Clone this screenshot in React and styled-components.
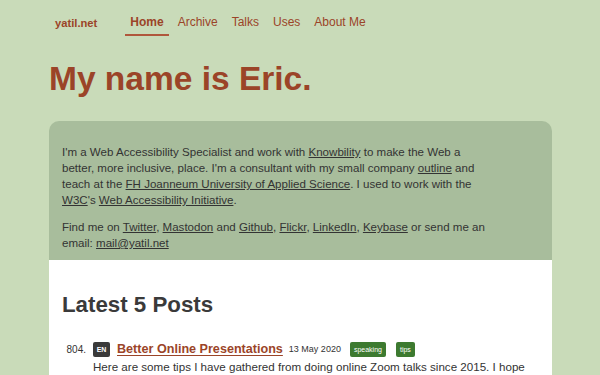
import React from 'react';
import styled, { createGlobalStyle } from 'styled-components';

const GlobalStyle = createGlobalStyle`
  body {
    margin: 0;
    background: #c9dbb9;
    font-family: "Liberation Sans", Arial, sans-serif;
    color: #333;
  }
`;

const Page = styled.div`
  width: 503px;
  margin: 0 auto;
  padding-left: 1px;
`;

const Nav = styled.nav`
  display: flex;
  align-items: center;
  height: 46px;
  padding-left: 6px;
`;

const Brand = styled.a`
  font-size: 11.2px;
  font-weight: bold;
  color: #9b4428;
  text-decoration: none;
  margin-right: 28px;
`;

const Menu = styled.ul`
  display: flex;
  gap: 4px;
  list-style: none;
  margin: 0;
  padding: 0;
`;

const MenuItem = styled.li`
  a {
    display: block;
    padding: 0 5px;
    line-height: 23px;
    font-size: 12px;
    color: #9b4428;
    text-decoration: none;
    font-weight: ${p => (p.$active ? 'bold' : 'normal')};
    border-bottom: 2px solid ${p => (p.$active ? '#b0573c' : 'transparent')};
  }
`;

const Title = styled.h1`
  margin: 11px 0 0 0;
  font-size: 33.5px;
  line-height: 44px;
  color: #9b4428;
`;

const Intro = styled.section`
  margin-top: 20px;
  background: #a8bd9c;
  border-radius: 10px 10px 0 0;
  padding: 23px 13px 9px;
  font-size: 11.55px;
  line-height: 16px;
  color: #333;

  p {
    margin: 0 0 11px;
  }
  p:last-child {
    margin-bottom: 0;
  }
  a {
    color: #333;
  }
`;

const Posts = styled.section`
  background: #fff;
  padding: 30px 13px 20px;
  min-height: 200px;
`;

const PostsTitle = styled.h2`
  margin: 0 0 20px;
  font-size: 22.3px;
  line-height: 30px;
  color: #3a3a3a;
`;

const PostList = styled.ol`
  list-style: none;
  margin: 0;
  padding: 0;
`;

const Post = styled.li`
  display: grid;
  grid-template-columns: 31px 1fr;
  align-items: start;
`;

const Number = styled.span`
  font-size: 10px;
  line-height: 18px;
  color: #333;
  text-align: right;
  padding-right: 7px;
  padding-top: 1px;
`;

const Meta = styled.div`
  display: flex;
  align-items: center;
  height: 18px;
`;

const Lang = styled.abbr`
  display: inline-flex;
  align-items: center;
  justify-content: center;
  width: 17px;
  height: 15px;
  border-radius: 2px;
  background: #3a3a3a;
  color: #fff;
  font-size: 7px;
  font-weight: bold;
  text-decoration: none;
  margin-right: 7px;
`;

const PostLink = styled.a`
  font-size: 12.6px;
  font-weight: bold;
  color: #9b4428;
  text-decoration: underline;
  text-underline-offset: 2px;
  margin-right: 6px;
`;

const Date = styled.time`
  font-size: 9px;
  color: #333;
  margin-right: 9px;
`;

const Tag = styled.a`
  display: inline-flex;
  align-items: center;
  height: 15px;
  padding: 0 4px;
  border-radius: 2px;
  background: #3d7a30;
  color: #fff;
  font-size: 7px;
  text-decoration: none;
  margin-right: 10px;
`;

const Summary = styled.p`
  grid-column: 2;
  margin: 0;
  font-size: 11.6px;
  line-height: 16px;
  color: #333;
`;

export default function App() {
  return (
    <>
      <GlobalStyle />
      <Page>
        <Nav>
          <Brand href="#">yatil.net</Brand>
          <Menu>
            <MenuItem $active><a href="#">Home</a></MenuItem>
            <MenuItem><a href="#">Archive</a></MenuItem>
            <MenuItem><a href="#">Talks</a></MenuItem>
            <MenuItem><a href="#">Uses</a></MenuItem>
            <MenuItem><a href="#">About Me</a></MenuItem>
          </Menu>
        </Nav>
        <Title>My name is Eric.</Title>
        <Intro>
          <p>
            I'm a Web Accessibility Specialist and work with <a href="#">Knowbility</a> to make the Web a
            <br />
            better, more inclusive, place. I'm a consultant with my small company <a href="#">outline</a> and
            <br />
            teach at the <a href="#">FH Joanneum University of Applied Science</a>. I used to work with the
            <br />
            <a href="#">W3C</a>'s <a href="#">Web Accessibility Initiative</a>.
          </p>
          <p>
            Find me on <a href="#">Twitter</a>, <a href="#">Mastodon</a> and <a href="#">Github</a>,{' '}
            <a href="#">Flickr</a>, <a href="#">LinkedIn</a>, <a href="#">Keybase</a> or send me an
            <br />
            email: <a href="#">mail@yatil.net</a>
          </p>
        </Intro>
        <Posts>
          <PostsTitle>Latest 5 Posts</PostsTitle>
          <PostList>
            <Post>
              <Number>804.</Number>
              <Meta>
                <Lang title="English">EN</Lang>
                <PostLink href="#">Better Online Presentations</PostLink>
                <Date>13 May 2020</Date>
                <Tag href="#">speaking</Tag>
                <Tag href="#">tips</Tag>
              </Meta>
              <Summary>
                Here are some tips I have gathered from doing online Zoom talks since 2015. I hope
                they help you too.
              </Summary>
            </Post>
          </PostList>
        </Posts>
      </Page>
    </>
  );
}
